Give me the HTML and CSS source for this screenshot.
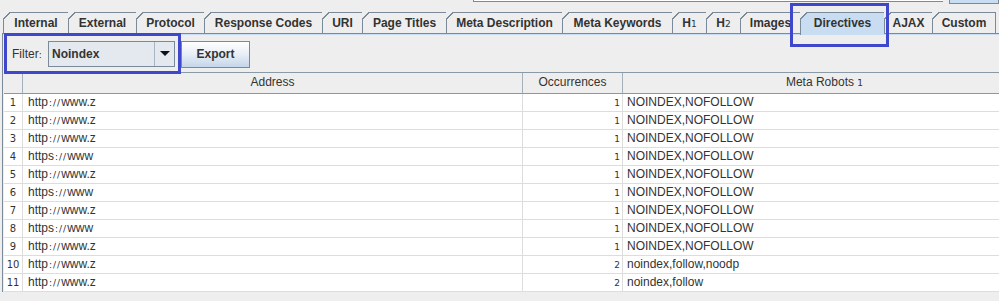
FILE: index.html
```html
<!DOCTYPE html>
<html lang="en">

<head>
  <meta charset="UTF-8">
  <title>Directives</title>
  <link rel="stylesheet" href="styles.css">
</head>

<body>
  <div class="window">
    <div class="topbar">
      <div class="search"></div>
      <div class="gobtn"></div>
    </div>

    <div class="tabs">
      <div class="tab" style="width:65px">Internal</div>
      <div class="tab" style="width:68px">External</div>
      <div class="tab" style="width:68px">Protocol</div>
      <div class="tab" style="width:118px">Response Codes</div>
      <div class="tab" style="width:40px">URI</div>
      <div class="tab" style="width:84px">Page Titles</div>
      <div class="tab" style="width:116px">Meta Description</div>
      <div class="tab" style="width:110px">Meta Keywords</div>
      <div class="tab" style="width:34px">H<span class="sm">1</span></div>
      <div class="tab" style="width:34px">H<span class="sm">2</span></div>
      <div class="tab" style="width:60px">Images</div>
      <div class="tab selected" style="width:84px">Directives</div>
      <div class="tab" style="width:48px">AJAX</div>
      <div class="tab last" style="width:64px">Custom</div>
    </div>

    <div class="pane">
      <div class="filter">
        <span class="filter-label">Filter<span class="sm">:</span></span>
        <div class="combo">
          <span class="combo-value">Noindex</span>
          <span class="combo-arrow"></span>
        </div>
        <button class="export">Export</button>
      </div>

      <div class="grid">
        <div class="row head">
          <div class="cell"></div>
          <div class="cell">Address</div>
          <div class="cell">Occurrences</div>
          <div class="cell">Meta Robots <span class="sm">1</span></div>
        </div>
        <div id="rows"></div>
      </div>
    </div>

    <div class="mark mark-tab"></div>
    <div class="mark mark-filter"></div>
  </div>

  <script>
    const data = [
      ['http', 'www.z', 1, 'NOINDEX,NOFOLLOW'],
      ['http', 'www.z', 1, 'NOINDEX,NOFOLLOW'],
      ['http', 'www.z', 1, 'NOINDEX,NOFOLLOW'],
      ['https', 'www', 1, 'NOINDEX,NOFOLLOW'],
      ['http', 'www.z', 1, 'NOINDEX,NOFOLLOW'],
      ['https', 'www', 1, 'NOINDEX,NOFOLLOW'],
      ['http', 'www.z', 1, 'NOINDEX,NOFOLLOW'],
      ['https', 'www', 1, 'NOINDEX,NOFOLLOW'],
      ['http', 'www.z', 1, 'NOINDEX,NOFOLLOW'],
      ['http', 'www.z', 2, 'noindex,follow,noodp'],
      ['http', 'www.z', 2, 'noindex,follow']
    ];

    const rows = document.getElementById('rows');
    data.forEach((d, i) => {
      const row = document.createElement('div');
      row.className = 'row';
      row.innerHTML =
        `<div class="cell num"><span class="sm">${i + 1}</span></div>` +
        `<div class="cell addr">${d[0]}<span class="sm sep">://</span>${d[1]}</div>` +
        `<div class="cell occ"><span class="sm">${d[2]}</span></div>` +
        `<div class="cell robots">${d[3]}</div>`;
      rows.appendChild(row);
    });
  </script>
</body>

</html>
```

FILE: styles.css
```css
body {
  margin: 0;
  background-color: #eeeeee;
  color: #333333;
  font-family: "Liberation Sans", Arial, sans-serif;
  font-size: 12px;
  overflow: hidden;
}

.window {
  position: relative;
  width: 999px;
  height: 301px;
  overflow: hidden;
  padding-left: 2px;
  box-sizing: border-box;
}

.sm {
  font-family: "DejaVu Sans", sans-serif;
  font-size: 9px;
  font-weight: normal;
}

.sep {
  letter-spacing: 1px;
  padding-left: 1px;
}

/* top toolbar, only its lower edge is visible */
.topbar {
  display: flex;
  align-items: flex-start;
  height: 12px;
}

.search {
  margin-left: 471px;
  width: 469px;
  height: 1px;
  background-color: #ffffff;
  border-left: 1px solid #7a8a99;
  border-bottom: 1px solid #7a8a99;
}

.gobtn {
  margin-left: 6px;
  flex: 1;
  height: 3px;
  background-color: #c8ddf2;
  border: 1px solid #7a8a99;
  border-top: none;
}

/* tabs */
.tabs {
  display: flex;
  margin-left: 1px;
  height: 21px;
}

.tab {
  position: relative;
  box-sizing: border-box;
  height: 21px;
  padding-top: 1px;
  line-height: 19px;
  border-top: 1px solid #7a8a99;
  border-left: 1px solid #7a8a99;
  text-align: center;
  font-weight: bold;
  white-space: nowrap;
}

.tab::before {
  content: "";
  position: absolute;
  left: -1px;
  top: -1px;
  width: 7px;
  height: 7px;
  background: linear-gradient(to bottom right, #eeeeee 0, #eeeeee 46%, #7a8a99 46%, #7a8a99 60%, transparent 60%);
}

.tab.last {
  border-right: 1px solid #7a8a99;
}

.tab.selected {
  height: 23px;
  background-color: #c8ddf2;
  z-index: 1;
}

/* content pane */
.pane {
  border-top: 1px solid #7a8a99;
  border-left: 1px solid #7a8a99;
  box-shadow: inset 0 1px 0 #c8ddf2;
  padding-top: 1px;
}

.filter {
  display: flex;
  align-items: center;
  height: 36px;
  padding-left: 9px;
  padding-top: 1px;
  box-sizing: border-box;
}

.filter-label {
  width: 36px;
}

.combo {
  display: flex;
  width: 127px;
  height: 26px;
  box-sizing: border-box;
  border: 1px solid #7a8a99;
  background-color: #e3e9ef;
}

.combo-value {
  flex: 1;
  padding-left: 3px;
  line-height: 24px;
  font-weight: bold;
  border-right: 1px solid #a8b6c4;
}

.combo-arrow {
  width: 19px;
  display: flex;
  align-items: center;
  justify-content: center;
}

.combo-arrow::after {
  content: "";
  border-left: 5px solid transparent;
  border-right: 5px solid transparent;
  border-top: 5px solid #111111;
}

.export {
  margin-left: 6px;
  width: 69px;
  height: 27px;
  margin-top: 1px;
  border: 1px solid #7a8a99;
  background: linear-gradient(#ffffff, #eaf0f7 45%, #c4d6e9);
  color: #333333;
  font-family: "Liberation Sans", Arial, sans-serif;
  font-size: 12px;
  font-weight: bold;
  padding: 0;
}

/* table */
.grid {
  margin-left: 1px;
  margin-top: 1px;
  width: 1023px;
}

.row {
  display: grid;
  grid-template-columns: 19px 500px 100px 1fr;
  height: 18px;
  box-sizing: border-box;
  background-color: #ffffff;
  border-bottom: 1px solid #dddddd;
}

.row .cell {
  border-right: 1px solid #dddddd;
  line-height: 17px;
  white-space: nowrap;
  overflow: hidden;
}

.row.head {
  height: 22px;
  background-color: #eeeeee;
  border-top: 1px solid #8a99a6;
  border-bottom: 1px solid #8a99a6;
}

.row.head .cell {
  border-right: 1px solid #a4b0bc;
  text-align: center;
  line-height: 19px;
}

.num {
  text-align: center;
}

.num .sm {
  font-size: 10px;
}

.addr {
  padding-left: 5px;
}

.occ {
  text-align: right;
  padding-right: 2px;
}

.robots {
  padding-left: 4px;
}

/* annotation boxes */
.mark {
  position: absolute;
  border: 3px solid #3f48cc;
  box-sizing: border-box;
  z-index: 2;
}

.mark-tab {
  left: 790px;
  top: 3px;
  width: 99px;
  height: 44px;
}

.mark-filter {
  left: 4px;
  top: 33px;
  width: 177px;
  height: 41px;
}
```
